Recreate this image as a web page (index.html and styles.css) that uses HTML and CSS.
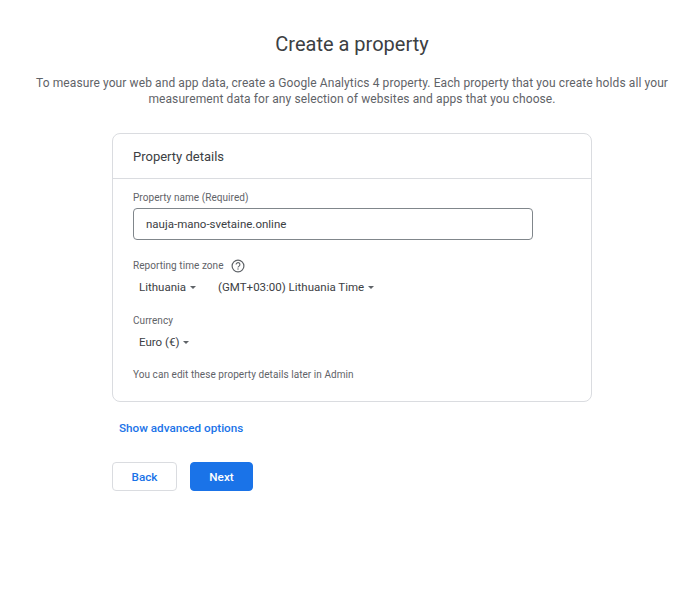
FILE: index.html
```html
<!DOCTYPE html>
<html lang="en">
<head>
<meta charset="utf-8">
<title>Create a property</title>
<link rel="stylesheet" href="styles.css">
</head>
<body>
<main class="page">
  <h1 class="title">Create a property</h1>
  <p class="intro">To measure your web and app data, create a Google Analytics 4 property. Each property that you create holds all your measurement data for any selection of websites and apps that you choose.</p>
  <section class="form-area">
    <div class="card">
      <h2 class="card-title">Property details</h2>
      <div class="card-body">
        <label class="label">Property name (Required)</label>
        <div class="input">nauja-mano-svetaine.online</div>
        <div class="label label-help tz-label">Reporting time zone
          <svg class="help" width="14" height="14" viewBox="0 0 14 14" aria-hidden="true"><circle cx="7" cy="7" r="5.9" fill="none" stroke="#5f6368" stroke-width="1.2"/><path d="M5.1 5.6a1.9 1.9 0 1 1 3 1.5c-.7.5-1.1.8-1.1 1.5" fill="none" stroke="#5f6368" stroke-width="1.1"/><rect x="6.4" y="9.4" width="1.2" height="1.2" fill="#5f6368"/></svg>
        </div>
        <div class="selects tz-selects">
          <span class="select">Lithuania<i class="caret"></i></span>
          <span class="select">(GMT+03:00) Lithuania Time<i class="caret"></i></span>
        </div>
        <div class="label currency-label">Currency</div>
        <div class="selects currency-selects">
          <span class="select">Euro (€)<i class="caret"></i></span>
        </div>
        <p class="note">You can edit these property details later in Admin</p>
      </div>
    </div>
    <a class="advanced">Show advanced options</a>
    <div class="actions">
      <button class="btn btn-back">Back</button>
      <button class="btn btn-next">Next</button>
    </div>
  </section>
</main>
</body>
</html>
```
FILE: styles.css
```css
* { box-sizing: border-box; }
html, body { margin: 0; padding: 0; background: #fff; }
body { font-family: Roboto, "Liberation Sans", sans-serif; color: #3c4043; }
.page { width: 704px; display: flex; flex-direction: column; align-items: center; padding-top: 32px; }
.title { margin: 0; font-size: 20px; font-weight: 400; line-height: 24px; color: #3c4043; }
.intro { margin: 19px 0 0; width: 640px; font-size: 12px; line-height: 16px; text-align: center; color: #5f6368; letter-spacing: .1px; }
.form-area { width: 480px; margin-top: 26px; }
.card { border: 1px solid #dadce0; border-radius: 8px; height: 269px; }
.card-title { margin: 0; height: 45px; padding: 14px 20px 0; font-size: 13px; line-height: 17px; font-weight: 400; color: #3c4043; border-bottom: 1px solid #dadce0; }
.card-body { padding: 13px 20px 0; }
.label { display: block; font-size: 10px; line-height: 12px; color: #5f6368; letter-spacing: .06px; }
.input { margin-top: 4px; width: 400px; height: 32px; border: 1px solid #80868b; border-radius: 4px; padding: 0 12px; font-size: 11.5px; line-height: 30px; color: #3c4043; }
.label-help { display: flex; align-items: center; gap: 7px; }
.tz-label { margin-top: 19px; height: 14px; }
.selects { display: flex; gap: 22px; padding-left: 6px; height: 20px; align-items: center; }
.tz-selects { margin-top: 4px; }
.currency-selects { margin-top: 5px; }
.select { font-size: 11.5px; line-height: 20px; color: #3c4043; display: inline-flex; align-items: center; }
.caret { display: inline-block; margin-left: 4px; width: 0; height: 0; border-left: 3.5px solid transparent; border-right: 3.5px solid transparent; border-top: 3.5px solid #5f6368; }
.currency-label { margin-top: 18px; }
.note { margin: 17px 0 0; font-size: 10px; line-height: 12px; color: #5f6368; letter-spacing: .06px; }
.advanced { display: block; margin: 18px 0 0 7px; font-size: 11.7px; line-height: 16px; font-weight: 500; color: #1a73e8; }
.actions { display: flex; gap: 13px; margin-top: 26px; }
.btn { height: 29px; border-radius: 4px; font-family: inherit; font-size: 11.7px; font-weight: 500; padding: 0; }
.btn-back { width: 65px; background: #fff; border: 1px solid #dadce0; color: #1a73e8; }
.btn-next { width: 63px; background: #1a73e8; border: 1px solid #1a73e8; color: #fff; }
```
